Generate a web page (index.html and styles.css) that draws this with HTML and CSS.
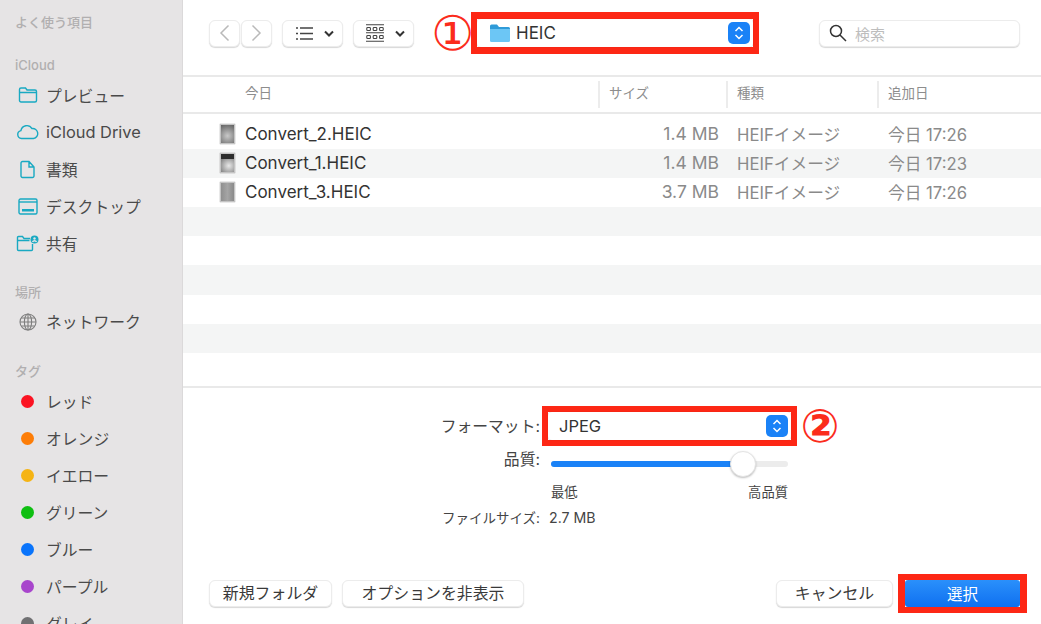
FILE: index.html
```html
<!DOCTYPE html>
<html lang="ja">
<head>
<meta charset="utf-8">
<title>HEIC</title>
<link rel="stylesheet" href="styles.css">
</head>
<body>
<div class="app">
  <aside class="sidebar">
    <section class="sec sec-first"><h2 class="sec-title">よく使う項目</h2></section>
    <section class="sec">
      <h2 class="sec-title">iCloud</h2>
      <div class="item"><span class="ico"><svg width="20" height="18" viewBox="0 0 20 18" class="teal"><path d="M1.5 3.5a1.5 1.5 0 0 1 1.5-1.5h4.5l1.5 2h8a1.5 1.5 0 0 1 1.5 1.5v9a1.5 1.5 0 0 1-1.5 1.5H3a1.5 1.5 0 0 1-1.5-1.5zM1.5 6.5h17"/></svg></span>プレビュー</div>
      <div class="item item-latin"><span class="ico"><svg width="23" height="16" viewBox="0 0 23 16" class="teal"><path d="M5.5 14.5a4 4 0 0 1-.6-7.9A6 6 0 0 1 16 4.6a5 5 0 0 1 1.5 9.900z"/></svg></span>iCloud Drive</div>
      <div class="item"><span class="ico"><svg width="16" height="19" viewBox="0 0 16 19" class="teal"><path d="M2.5 1.5h6.5l5 5.500v9a1.500 1.500 0 0 1-1.500 1.500h-10A1.500 1.500 0 0 1 1 16V3a1.500 1.500 0 0 1 1.500-1.500zM9 1.500v5.500h5"/></svg></span>書類</div>
      <div class="item"><span class="ico"><svg width="20" height="17" viewBox="0 0 20 17" class="teal"><rect x="1" y="1" width="18" height="15" rx="1.500"/><path d="M1 4h18"/><rect class="solid" x="4" y="11" width="12" height="2.500"/></svg></span>デスクトップ</div>
      <div class="item"><span class="ico"><svg width="23" height="17" viewBox="0 0 23 17" class="teal"><path d="M1.500 2.500a1 1 0 0 1 1-1h4l1.500 2h6M1.500 2.500v12a1 1 0 0 0 1 1h13a1 1 0 0 0 1-1V9M1.500 5.500h12"/><circle class="solid" cx="18.500" cy="4.500" r="4"/><circle cx="18.500" cy="3.500" r="1.200" fill="#e6e4e5" stroke="none"/><path d="M16.500 7a2.200 2.200 0 0 1 4 0" stroke="#e6e4e5" stroke-width="1.200"/></svg></span>共有</div>
    </section>
    <section class="sec sec-place">
      <h2 class="sec-title">場所</h2>
      <div class="item"><span class="ico"><svg width="18" height="18" viewBox="0 0 18 18" class="globe"><circle cx="9" cy="9" r="8"/><ellipse cx="9" cy="9" rx="3.600" ry="8"/><path d="M9 1v16M1 9h16M2.200 5h13.600M2.200 13h13.600"/></svg></span>ネットワーク</div>
    </section>
    <section class="sec sec-tags">
      <h2 class="sec-title">タグ</h2>
      <div class="item"><span class="ico"><span class="dot dot-red"></span></span>レッド</div>
      <div class="item"><span class="ico"><span class="dot dot-orange"></span></span>オレンジ</div>
      <div class="item"><span class="ico"><span class="dot dot-yellow"></span></span>イエロー</div>
      <div class="item"><span class="ico"><span class="dot dot-green"></span></span>グリーン</div>
      <div class="item"><span class="ico"><span class="dot dot-blue"></span></span>ブルー</div>
      <div class="item"><span class="ico"><span class="dot dot-purple"></span></span>パープル</div>
      <div class="item"><span class="ico"><span class="dot dot-gray"></span></span>グレイ</div>
    </section>
  </aside>

  <main class="main">
    <div class="toolbar">
      <div class="nav-pair">
        <button class="tb-btn nav-btn"><svg width="11" height="18" viewBox="0 0 11 18" class="line-light"><path d="M9.500 1.500 2 9l7.500 7.500"/></svg></button>
        <button class="tb-btn nav-btn"><svg width="11" height="18" viewBox="0 0 11 18" class="line-light"><path d="M1.500 1.500 9 9l-7.500 7.500"/></svg></button>
      </div>
      <button class="tb-btn view-btn">
        <svg width="17" height="13" viewBox="0 0 17 13" class="line-dark"><path d="M4 1h13M4 6.500h13M4 12h13M0 1h2M0 6.500h2M0 12h2"/></svg>
        <svg width="10" height="7" viewBox="0 0 10 7" class="chev"><path d="M1 1.500 5 5.500l4-4"/></svg>
      </button>
      <button class="tb-btn view-btn">
        <svg width="18" height="18" viewBox="0 0 18 18" class="line-thin"><path d="M0 .7h18M0 17.300h18M0 8.700h18"/><rect x=".8" y="3.500" width="3.600" height="3" rx=".8"/><rect x="7.200" y="3.500" width="3.600" height="3" rx=".8"/><rect x="13.600" y="3.500" width="3.600" height="3" rx=".8"/><rect x=".8" y="11.500" width="3.600" height="3" rx=".8"/><rect x="7.200" y="11.500" width="3.600" height="3" rx=".8"/><rect x="13.600" y="11.500" width="3.600" height="3" rx=".8"/></svg>
        <svg width="10" height="7" viewBox="0 0 10 7" class="chev"><path d="M1 1.500 5 5.500l4-4"/></svg>
      </button>
      <span class="num num-one">①</span>
      <div class="red-box folder-box">
        <div class="select">
          <svg width="20" height="18" viewBox="0 0 20 18" class="folder"><path fill="#2f9bd8" d="M0 2a1.500 1.500 0 0 1 1.500-1.500h5.500l2 2.500h9.500A1.500 1.500 0 0 1 20 4.500V6H0z"/><path fill="#6cc6f5" d="M0 5h20v11.500a1.500 1.500 0 0 1-1.500 1.500h-17A1.500 1.500 0 0 1 0 16.500z"/></svg>
          <span class="select-text">HEIC</span>
          <span class="stepper"><svg width="10" height="16" viewBox="0 0 10 16"><path d="M1.500 6 5 2.500 8.500 6M1.500 10 5 13.500 8.500 10"/></svg></span>
        </div>
      </div>
      <div class="search">
        <svg width="18" height="18" viewBox="0 0 18 18" class="glass"><circle cx="7" cy="7" r="5.500"/><path d="m11 11 6 6"/></svg>
        <span>検索</span>
      </div>
    </div>

    <div class="head">
      <div class="head-cell head-name">今日</div>
      <div class="head-cell">サイズ</div>
      <div class="head-cell">種類</div>
      <div class="head-cell">追加日</div>
    </div>

    <div class="list">
      <div class="row">
        <div class="cell-name"><span class="thumb thumb-a"></span>Convert_2.HEIC</div>
        <div class="cell-size">1.4 MB</div><div class="cell-kind">HEIFイメージ</div><div class="cell-kind">今日 17:26</div>
      </div>
      <div class="row">
        <div class="cell-name"><span class="thumb thumb-b"></span>Convert_1.HEIC</div>
        <div class="cell-size">1.4 MB</div><div class="cell-kind">HEIFイメージ</div><div class="cell-kind">今日 17:23</div>
      </div>
      <div class="row">
        <div class="cell-name"><span class="thumb thumb-c"></span>Convert_3.HEIC</div>
        <div class="cell-size">3.7 MB</div><div class="cell-kind">HEIFイメージ</div><div class="cell-kind">今日 17:26</div>
      </div>
      <div class="row"></div><div class="row"></div><div class="row"></div><div class="row"></div><div class="row"></div><div class="row"></div>
    </div>

    <div class="panel">
      <div class="form">
        <div class="label label-format">フォーマット:</div>
        <div class="control-format">
          <div class="red-box format-box">
            <div class="select">
              <span class="select-text format-text">JPEG</span>
              <span class="stepper"><svg width="10" height="16" viewBox="0 0 10 16"><path d="M1.500 6 5 2.500 8.500 6M1.500 10 5 13.500 8.500 10"/></svg></span>
            </div>
          </div>
          <span class="num num-two">②</span>
        </div>
        <div class="label label-quality">品質:</div>
        <div class="slider"><div class="track"><div class="track-fill"></div><div class="thumb-knob"></div></div></div>
        <div class="scale"><span>最低</span><span>高品質</span></div>
        <div class="label label-size">ファイルサイズ:</div>
        <div class="size-value">2.7 MB</div>
      </div>
      <div class="footer">
        <button class="btn btn-new">新規フォルダ</button>
        <button class="btn btn-opt">オプションを非表示</button>
        <button class="btn btn-cancel">キャンセル</button>
        <div class="red-box ok-box"><button class="btn-ok">選択</button></div>
      </div>
    </div>
  </main>
</div>
</body>
</html>
```

FILE: styles.css
```css
* { box-sizing: border-box; }
html, body { margin: 0; padding: 0; background: #fff; }
body {
  font-family: Inter, "Noto Sans CJK JP", sans-serif;
  color: #3a3a3a;
  overflow: hidden;
}
.app { display: flex; width: 1041px; height: 624px; overflow: hidden; }

/* sidebar */
.sidebar {
  width: 183px; flex: none; height: 624px; overflow: hidden;
  background: #e6e4e5; border-right: 1px solid #dbd9da;
  padding-top: 12px;
}
.sec { margin-bottom: 20px; }
.sec-first { margin-bottom: 23.400px; }
.sec-place { margin-bottom: 20.600px; }
.sec-title {
  margin: 0 0 1.500px 15px; height: 20px; line-height: 20px;
  font-size: 13px; font-weight: 500; color: #b1afb0;
}
.sec-tags .sec-title { margin-bottom: 2.400px; }
.item {
  display: flex; align-items: center; height: 37px;
  padding-left: 15px; font-size: 15.800px; color: #4a4a4a;
}
.item-latin { font-size: 16.400px; }
.ico { width: 25px; margin-right: 6px; display: flex; justify-content: center; align-items: center; }
.teal path, .teal rect, .teal circle { fill: none; stroke: #19a9c2; stroke-width: 1.400; }
.teal .solid { fill: #19a9c2; stroke: none; }
.teal circle.solid { fill: #19a9c2; stroke: none; }
.teal circle[fill] { fill: #e6e4e5; stroke: none; }
.teal path[stroke] { stroke: #e6e4e5; }
.globe circle, .globe ellipse, .globe path { fill: none; stroke: #7e7e7e; stroke-width: 1.100; }
.dot { width: 13px; height: 13px; border-radius: 50%; display: block; }
.dot-red { background: #fb1322; }
.dot-orange { background: #fd7d07; }
.dot-yellow { background: #f5b414; }
.dot-green { background: #0fbf12; }
.dot-blue { background: #0a74fb; }
.dot-purple { background: #a845cc; }
.dot-gray { background: #707072; }

/* main */
.main { flex: 1; min-width: 0; display: flex; flex-direction: column; height: 624px; }
.toolbar {
  height: 77px; flex: none; display: flex; align-items: center;
  padding: 0 21px 9px 26px; border-bottom: 2px solid #e9e9e9;
}
.nav-pair { display: flex; gap: 1px; }
button { font-family: inherit; padding: 0; margin: 0; }
.tb-btn {
  display: flex; align-items: center; justify-content: center;
  height: 27px; background: #fff; border: 1px solid #ececec; border-radius: 6px;
  box-shadow: 0 1px 1px rgba(0,0,0,.16);
}
.nav-btn { width: 31px; }
.view-btn { width: 61px; margin-left: 10px; gap: 11px; padding-left: 4px; }
.line-light path { fill: none; stroke: #b9b9b9; stroke-width: 1.500; }
.line-dark path { fill: none; stroke: #444; stroke-width: 1.300; }
.line-thin path, .line-thin rect { fill: none; stroke: #444; stroke-width: 1.100; }
.chev path { fill: none; stroke: #333; stroke-width: 2; }
.num {
  color: #fb2c1c; display: flex; justify-content: center; align-items: center; flex: none;
  height: 34px; line-height: 34px; font-family: "DejaVu Sans", sans-serif;
}
.num-one { font-size: 48px; width: 37px; margin-left: 20px; white-space: nowrap; }
.red-box { border: 6px solid #fd2715; flex: none; }
.folder-box { width: 288px; height: 42px; border-width: 7px 6px; }
.select {
  height: 100%; display: flex; align-items: center; background: #fff;
  border-radius: 4px; box-shadow: 0 0 1px rgba(0,0,0,.25);
}
.folder { margin-left: 13px; }
.select-text { margin-left: 6px; font-size: 17px; color: #333; }
.stepper {
  width: 22px; height: 22px; margin-left: auto; margin-right: 3px;
  background: #1a82f7; border-radius: 5px; display: flex; align-items: center; justify-content: center;
}
.stepper path { fill: none; stroke: #fff; stroke-width: 1.500; }
.search {
  margin-left: auto; width: 201px; height: 27px; display: flex; align-items: center;
  padding-left: 9px; gap: 8px; background: #fff; border: 1px solid #ececec;
  border-radius: 6px; box-shadow: 0 1px 1px rgba(0,0,0,.16);
  font-size: 15px; color: #bdbdbd;
}
.glass circle, .glass path { fill: none; stroke: #333; stroke-width: 1.500; }

/* table */
.head {
  display: grid; grid-template-columns: 415px 128px 151px 1fr;
  height: 37px; flex: none; border-bottom: 2px solid #e9e9e9; align-items: center;
}
.head-cell {
  height: 27px; line-height: 25px; padding-left: 9px; font-size: 13.500px; color: #8d8d8d;
  border-left: 2px solid #ececec;
}
.head-name { padding-left: 62px; border-left: 0; }
.list { height: 272px; flex: none; padding-top: 6px; overflow: hidden; }
.row {
  display: grid; grid-template-columns: 416px 128px 151px 1fr;
  height: 29.100px; align-items: center; font-size: 16.700px; padding-bottom: 2px;
}
.row:nth-child(even) { background: #f4f5f5; }
.cell-name { display: flex; align-items: center; padding-left: 37px; color: #333; font-size: 17px; }
.cell-size { text-align: right; padding-right: 8px; color: #8a8a8a; font-size: 17.500px; }
.cell-kind { padding-left: 10px; color: #8a8a8a; }
.thumb {
  width: 15px; height: 20px; margin-right: 10px; flex: none;
  border: 1px solid #c4c4c4; box-shadow: 0 0 1px rgba(0,0,0,.5);
}
.thumb-a { background: radial-gradient(circle at 50% 60%, #c9c9c9, #555 110%); }
.thumb-b { background: linear-gradient(#2d2d2d 0 30%, transparent 30%), radial-gradient(circle at 60% 65%, #e8e8e8, #666 90%); }
.thumb-c { background: linear-gradient(90deg, #8f8f8f, #a5a5a5 50%, #8a8a8a); }

/* panel */
.panel {
  flex: 1; min-height: 0; display: flex; flex-direction: column;
  border-top: 2px solid #e9e9e9; padding-top: 18px;
}
.form { display: grid; grid-template-columns: 357px 1fr; font-size: 15.800px; }
.label { text-align: right; height: 20px; line-height: 20px; color: #444; }
.label-format { align-self: center; padding-top: 1px; height: 21px; }
.control-format { display: flex; align-items: center; padding-left: 2px; }
.format-box { width: 255px; height: 40px; }
.format-text { margin-left: 11px; font-size: 16.500px; }
.num-two { font-size: 46px; margin-left: 6px; font-weight: 700; width: 34px; white-space: nowrap; }
.label-quality { margin-top: 4px; }
.slider { margin-top: 3px; padding-left: 11px; height: 30px; display: flex; align-items: center; }
.track { position: relative; width: 237px; height: 6px; border-radius: 3px; background: #ececec; }
.track-fill { width: 185px; height: 100%; border-radius: 3px; background: #1a82f7; }
.thumb-knob {
  position: absolute; left: 179px; top: -10px; width: 26px; height: 26px; border-radius: 50%;
  background: #fff; border: 1px solid #e4e4e4; box-shadow: 0 1px 2px rgba(0,0,0,.25);
}
.scale {
  grid-column: 2; display: flex; justify-content: space-between; width: 248px;
  padding-left: 11px; margin-top: 3px; height: 20px; line-height: 20px; font-size: 13.300px; color: #444;
}
.label-size { margin-top: 6px; font-size: 13.500px; }
.size-value { margin-top: 6px; padding-left: 9px; height: 20px; line-height: 20px; font-size: 14.200px; color: #444; }
.footer {
  margin-top: auto; display: flex; align-items: center; padding: 0 14px 11px 26px; gap: 10px;
}
.btn {
  height: 27px; background: #fff; border: 1px solid #ececec; border-radius: 6px; padding-bottom: 2px;
  box-shadow: 0 1px 1px rgba(0,0,0,.16); font-size: 15.900px; color: #3a3a3a;
}
.btn-new { width: 123px; }
.btn-opt { width: 182px; }
.btn-cancel { width: 117px; margin-left: auto; }
.ok-box { width: 129px; height: 39px; margin-left: -5px; border-width: 6px 7px; }
.btn-ok {
  width: 100%; height: 100%; border: 0; border-radius: 3px; color: #fff; font-size: 15.500px; padding-bottom: 2px;
  background: linear-gradient(#2a90fb, #0f70f0);
}
```
